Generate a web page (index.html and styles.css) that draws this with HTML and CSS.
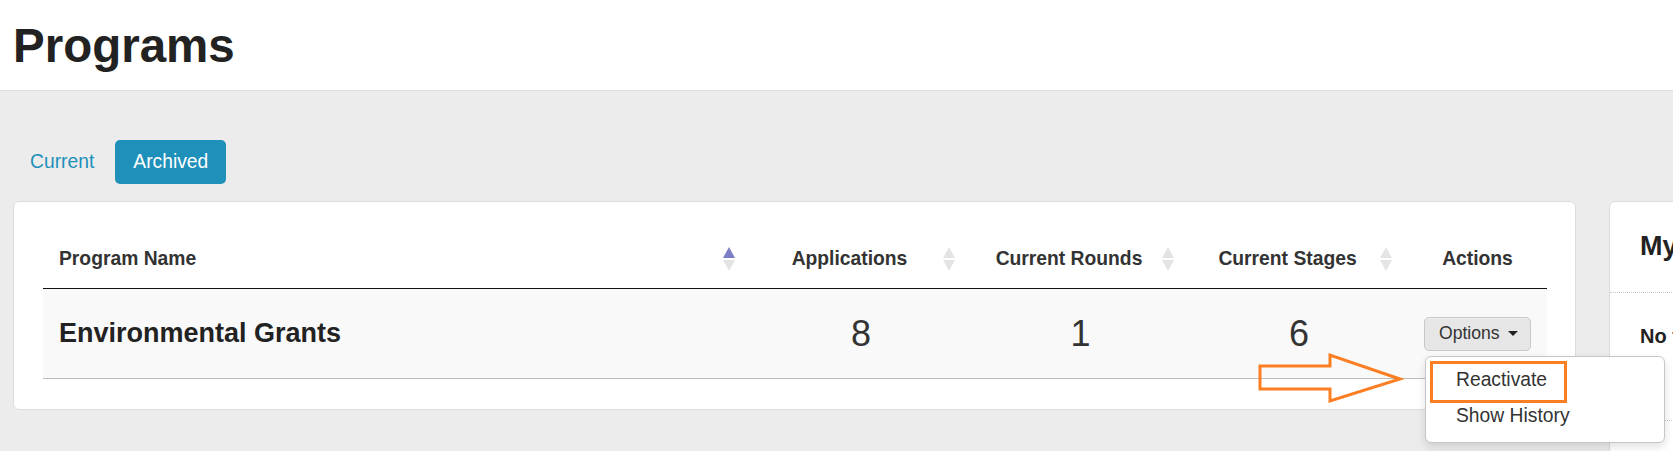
FILE: index.html
```html
<!DOCTYPE html>
<html lang="en">
<head>
<meta charset="utf-8">
<title>Programs</title>
<link rel="stylesheet" href="styles.css">
</head>
<body>
<header class="page-header">
  <h1 class="page-title">Programs</h1>
</header>
<main class="main">
  <nav class="tabs">
    <a class="tab">Current</a>
    <a class="tab tab-active">Archived</a>
  </nav>
  <div class="content-row">
    <section class="card">
      <table class="programs-table">
        <colgroup>
          <col class="col-name">
          <col class="col-num">
          <col class="col-num2">
          <col class="col-num3">
          <col class="col-actions">
        </colgroup>
        <thead>
          <tr>
            <th class="th-left sortable">Program Name<span class="sort"><i class="up active"></i><i class="down"></i></span></th>
            <th class="sortable">Applications<span class="sort"><i class="up"></i><i class="down"></i></span></th>
            <th class="sortable">Current Rounds<span class="sort"><i class="up"></i><i class="down"></i></span></th>
            <th class="sortable">Current Stages<span class="sort"><i class="up"></i><i class="down"></i></span></th>
            <th class="th-actions">Actions</th>
          </tr>
        </thead>
        <tbody>
          <tr>
            <td class="td-name">Environmental Grants</td>
            <td class="td-num">8</td>
            <td class="td-num">1</td>
            <td class="td-num">6</td>
            <td class="td-actions">
              <div class="dropdown">
                <button class="btn-options">Options <span class="caret"></span></button>
                <ul class="menu">
                  <li class="menu-item">Reactivate</li>
                  <li class="menu-item">Show History</li>
                  <span class="highlight"></span>
                </ul>
              </div>
            </td>
          </tr>
        </tbody>
      </table>
    </section>
    <aside class="panel">
      <div class="panel-head">My Tasks</div>
      <div class="panel-body">No tasks assigned</div>
    </aside>
  </div>
</main>
<svg class="annot-arrow" width="150" height="54" viewBox="1256 351 150 54">
  <polygon points="1260,366 1330,366 1330,355 1400,379 1330,401 1330,389 1260,389" fill="none" stroke="#fb7e22" stroke-width="3" stroke-linejoin="miter"/>
</svg>
</body>
</html>
```
FILE: styles.css
```css
* { box-sizing: border-box; }
html, body { margin: 0; padding: 0; }
body {
  width: 1673px;
  height: 451px;
  overflow: hidden;
  background: #ececec;
  font-family: "Liberation Sans", Arial, sans-serif;
  color: #333;
  position: relative;
}
.page-header {
  background: #fff;
  height: 91px;
  border-bottom: 1px solid #dedede;
  padding: 19px 0 0 13px;
}
.page-title {
  margin: 0;
  font-size: 47.5px;
  line-height: 54px;
  font-weight: bold;
  color: #222;
}
.main {
  padding: 49px 0 0 12px;
}
.tabs {
  display: flex;
  gap: 3px;
  height: 44px;
}
.tab {
  display: block;
  padding: 0 18px;
  line-height: 44px;
  font-size: 19.3px;
  color: #1e90b9;
  border-radius: 5px;
}
.tab-active {
  background: #1e90b9;
  color: #fff;
}
.content-row {
  display: flex;
  gap: 33px;
  margin-top: 17px;
  align-items: flex-start;
}
.card {
  flex: none;
  width: 1563px;
  margin-left: 1px;
  background: #fff;
  border: 1px solid #dcdcdc;
  border-radius: 6px;
  padding: 28px 28px 30px 29px;
}
.programs-table {
  width: 1504px;
  table-layout: fixed;
  border-collapse: separate;
  border-spacing: 0;
}
.col-name { width: 708px; }
.col-num { width: 220px; }
.col-num2 { width: 219px; }
.col-num3 { width: 218px; }
.col-actions { width: 139px; }
.programs-table th {
  position: relative;
  height: 59px;
  padding: 0 39px 0 16px;
  font-size: 19.3px;
  font-weight: bold;
  color: #333;
  text-align: center;
  vertical-align: middle;
  border-bottom: 1px solid #111;
  white-space: nowrap;
}
.programs-table th.th-left { text-align: left; }
.programs-table th.th-actions { padding: 0 8px; }
.sort {
  position: absolute;
  right: 16px;
  top: 17px;
  width: 12px;
  display: flex;
  flex-direction: column;
  gap: 2px;
}
.sort i {
  display: block;
  width: 0;
  height: 0;
  border-left: 6px solid transparent;
  border-right: 6px solid transparent;
}
.sort .up { border-bottom: 11px solid #e4e4e4; }
.sort .up.active { border-bottom-color: #7c7fc6; }
.sort .down { border-top: 11px solid #e4e4e4; }
.programs-table td {
  height: 90px;
  background: #f9f9f9;
  border-bottom: 1px solid #bdbdbd;
  vertical-align: middle;
  padding: 0 16px;
}
.td-name {
  font-size: 27px;
  font-weight: bold;
  color: #222;
}
.td-num {
  text-align: center;
  font-size: 36px;
  color: #333;
}
.td-actions {
  text-align: center;
}
.dropdown {
  position: relative;
  display: inline-block;
  z-index: 5;
}
.btn-options {
  display: flex;
  align-items: center;
  gap: 8px;
  width: 107px;
  height: 34px;
  padding: 0 0 0 14px;
  background: #e6e6e6;
  border: 1px solid #c8c8c8;
  border-radius: 5px;
  font-family: "Liberation Sans", Arial, sans-serif;
  font-size: 17.6px;
  color: #333;
  box-shadow: inset 0 1px 0 rgba(255,255,255,.4);
}
.caret {
  display: block;
  width: 0;
  height: 0;
  border-left: 5px solid transparent;
  border-right: 5px solid transparent;
  border-top: 5px solid #222;
}
.menu {
  position: absolute;
  left: 1px;
  top: 39px;
  width: 240px;
  margin: 0;
  padding: 5px 0 8px;
  list-style: none;
  background: #fff;
  border: 1px solid #c6c6c6;
  border-radius: 6px;
  box-shadow: 0 4px 10px rgba(0,0,0,.12);
  text-align: left;
}
.menu-item {
  height: 36px;
  line-height: 36px;
  padding-left: 30px;
  font-size: 19.3px;
  color: #333;
  white-space: nowrap;
}
.highlight {
  position: absolute;
  left: 4px;
  top: 4px;
  width: 137px;
  height: 42px;
  border: 3px solid #fb7e22;
}
.panel {
  flex: none;
  width: 420px;
  height: 320px;
  background: #fff;
  border: 1px solid #dcdcdc;
  border-radius: 6px;
}
.panel-head {
  height: 91px;
  padding: 0 30px;
  line-height: 88px;
  font-size: 27px;
  font-weight: bold;
  color: #222;
  border-bottom: 1px dotted #c8c8c8;
  white-space: nowrap;
}
.panel-body {
  height: 128px;
  padding: 30px 30px 0;
  line-height: 26px;
  font-size: 20px;
  font-weight: bold;
  color: #222;
  border-bottom: 1px dotted #c8c8c8;
  white-space: nowrap;
}
.annot-arrow {
  position: absolute;
  left: 1256px;
  top: 351px;
  z-index: 6;
}
```
